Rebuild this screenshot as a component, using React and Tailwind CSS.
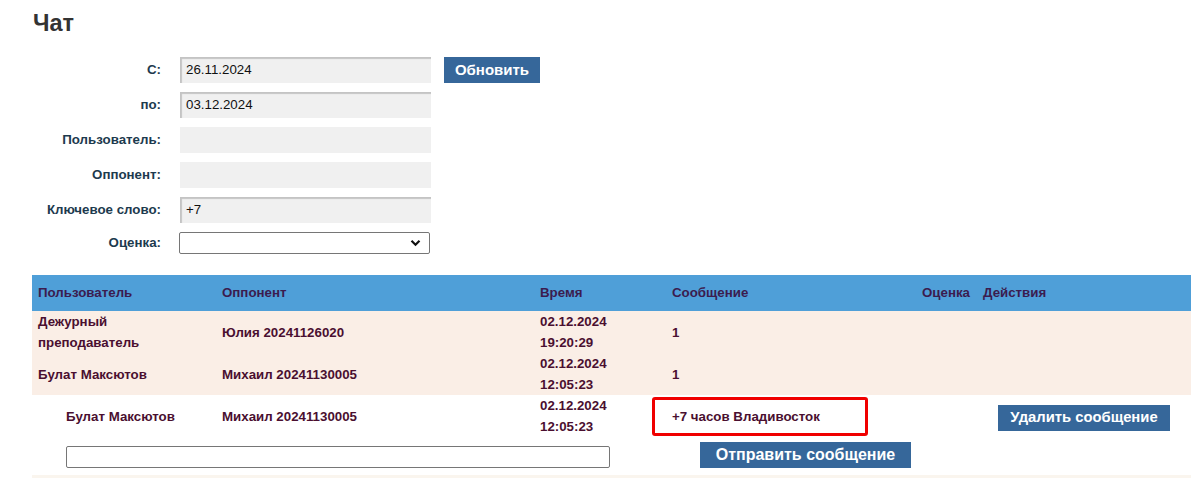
import React from "react";

const rowBg = "bg-[#faeee6]";
const txt = "text-[#4a0f30]";

function Field({ label, value, shadow }) {
  return (
    <div className="flex items-center h-[26px] mb-[9px]">
      <div className="w-[161px] text-right text-[13.3px] font-bold text-[#1d3a4e]">{label}</div>
      <div
        className={
          "ml-[19px] w-[251px] h-[26px] bg-[#f0f0f0] flex items-center pl-[6px] text-[13.3px] text-[#111] " +
          (shadow ? "shadow-[inset_2px_2px_1px_rgba(0,0,0,0.18)]" : "")
        }
      >
        {value}
      </div>
    </div>
  );
}

function Btn({ children, className }) {
  return (
    <div
      className={
        "bg-[#36679a] text-white font-bold flex items-center justify-center h-[26px] " + (className || "")
      }
    >
      {children}
    </div>
  );
}

const cols = "grid grid-cols-[184px_318px_132px_250px_61px_214px]";

function DataRow({ user, opp, date, time, msg, bg }) {
  return (
    <div className={cols + " h-[42px] text-[13.3px] font-bold leading-[21px] " + txt + " " + bg}>
      <div className="pl-[6px] flex items-center">{user}</div>
      <div className="pl-[6px] flex items-center">{opp}</div>
      <div className="pl-[6px] flex flex-col justify-center">
        <span>{date}</span>
        <span>{time}</span>
      </div>
      <div className="pl-[6px] flex items-center">{msg}</div>
      <div></div>
      <div></div>
    </div>
  );
}

export default function App() {
  return (
    <div className="w-[1196px] h-[478px] bg-white overflow-hidden font-['Liberation_Sans',Arial,sans-serif]">
      <h1 className="pl-[33px] pt-[9px] text-[23.5px] font-bold text-[#333] leading-[28px]">Чат</h1>
      <div className="mt-[20px]">
        <div className="flex items-center h-[26px] mb-[9px]">
          <div className="w-[161px] text-right text-[13.3px] font-bold text-[#1d3a4e]">С:</div>
          <div className="ml-[19px] w-[251px] h-[26px] bg-[#f0f0f0] flex items-center pl-[6px] text-[13.3px] text-[#111] shadow-[inset_2px_2px_1px_rgba(0,0,0,0.18)]">
            26.11.2024
          </div>
          <Btn className="ml-[13px] w-[96px] text-[15px] h-[25px]">Обновить</Btn>
        </div>
        <Field label="по:" value="03.12.2024" shadow />
        <Field label="Пользователь:" value="" />
        <Field label="Оппонент:" value="" />
        <Field label="Ключевое слово:" value="+7" shadow />
        <div className="flex items-center h-[22px]">
          <div className="w-[161px] text-right text-[13.3px] font-bold text-[#1d3a4e]">Оценка:</div>
          <div className="ml-[18px] w-[251px] h-[22px] border border-[#767676] rounded-[2px] bg-white flex items-center justify-end pr-[8px]">
            <svg width="11" height="8" viewBox="0 0 11 8">
              <path d="M1.5 1.8 L5.5 5.8 L9.5 1.8" fill="none" stroke="#111" strokeWidth="2.2" />
            </svg>
          </div>
        </div>
      </div>

      <div className="mt-[21px] ml-[32px] w-[1159px]">
        <div className={cols + " h-[36px] bg-[#4f9fd8] text-[13.3px] font-bold text-[#3b1c4f] items-center"}>
          <div className="pl-[6px]">Пользователь</div>
          <div className="pl-[6px]">Оппонент</div>
          <div className="pl-[6px]">Время</div>
          <div className="pl-[6px]">Сообщение</div>
          <div className="pl-[6px]">Оценка</div>
          <div className="pl-[6px]">Действия</div>
        </div>
        <DataRow
          user={<span className="block w-[110px]">Дежурный преподаватель</span>}
          opp="Юлия 20241126020"
          date="02.12.2024"
          time="19:20:29"
          msg="1"
          bg={rowBg}
        />
        <DataRow
          user="Булат Максютов"
          opp="Михаил 20241130005"
          date="02.12.2024"
          time="12:05:23"
          msg="1"
          bg={rowBg}
        />
        <div className={cols + " h-[42px] text-[13.3px] font-bold leading-[21px] bg-white " + txt}>
          <div className="pl-[34px] flex items-center">Булат Максютов</div>
          <div className="pl-[6px] flex items-center">Михаил 20241130005</div>
          <div className="pl-[6px] flex flex-col justify-center">
            <span>02.12.2024</span>
            <span>12:05:23</span>
          </div>
          <div className="relative pl-[6px] flex items-center">
            +7 часов Владивосток
            <span className="absolute left-[-14px] top-[2px] w-[216px] h-[39px] border-[3px] border-[#f00000] rounded-[3px]"></span>
          </div>
          <div></div>
          <div className="flex items-center justify-center pt-[3px]">
            <Btn className="w-[172px] text-[14.8px]">Удалить сообщение</Btn>
          </div>
        </div>
        <div className="flex items-end h-[38px] pb-[7px] pl-[34px]">
          <div className="w-[544px] h-[22px] border border-[#767676] rounded-[2px] bg-white"></div>
          <Btn className="ml-[90px] w-[211px] text-[16px]">Отправить сообщение</Btn>
        </div>
        <div className="h-[10px] bg-[#faf5ee]"></div>
      </div>
    </div>
  );
}
